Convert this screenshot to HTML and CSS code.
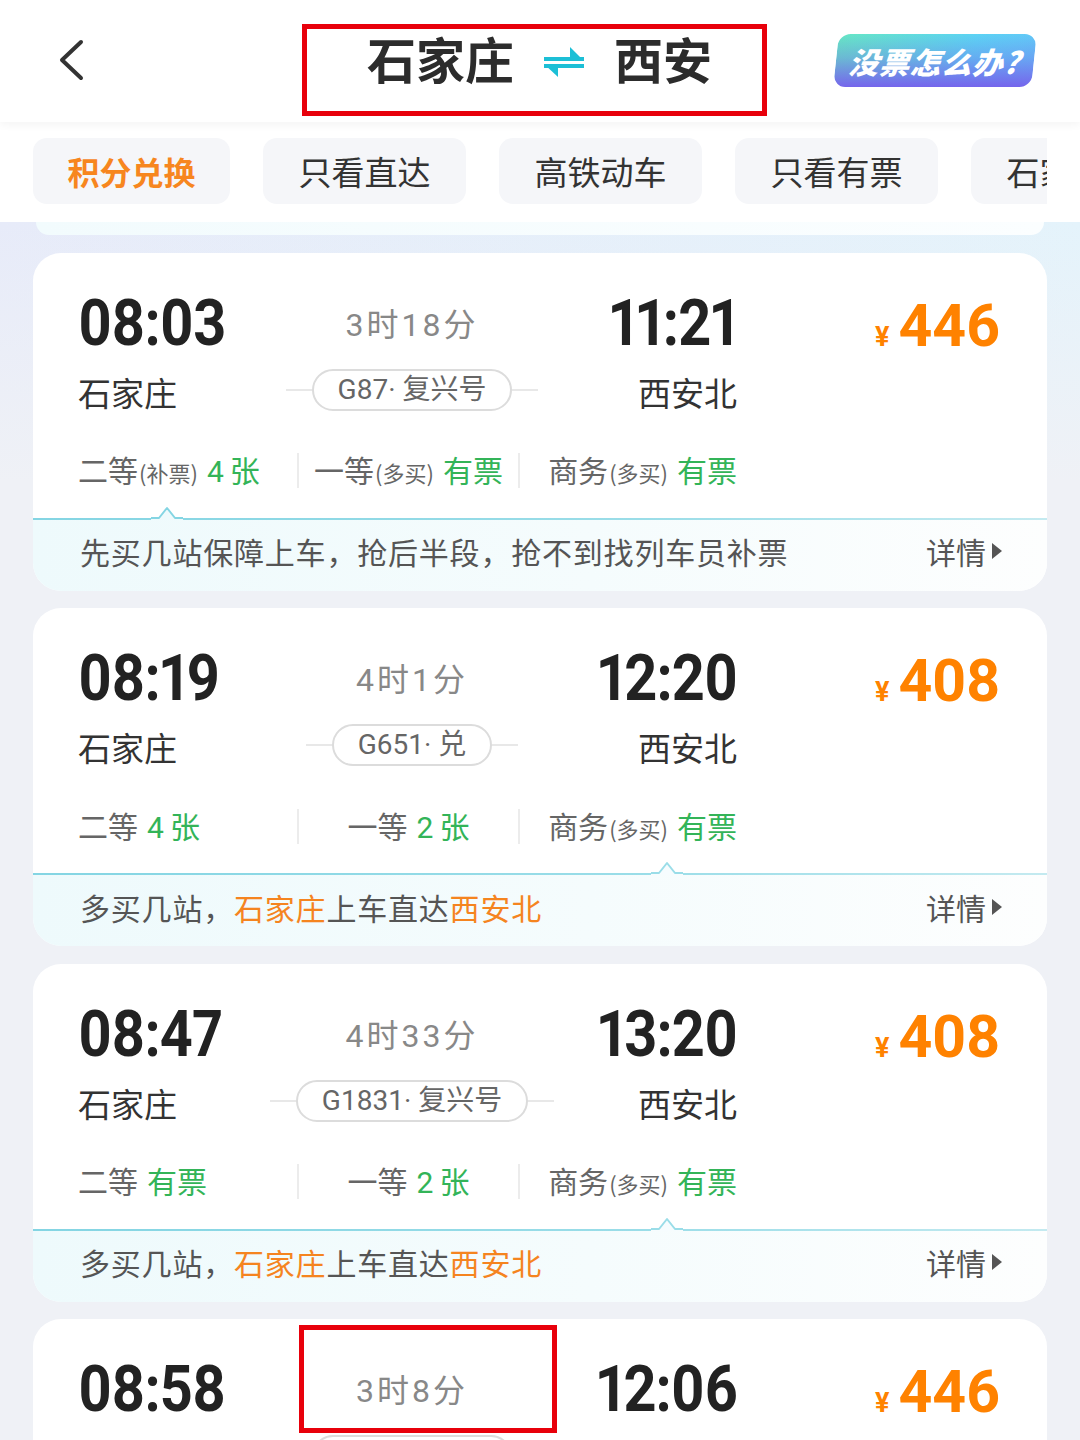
FILE: index.html
```html
<!DOCTYPE html>
<html lang="zh-CN">
<head>
<meta charset="utf-8">
<title>石家庄 ⇌ 西安</title>
<link rel="stylesheet" href="styles.css">
</head>
<body>
<header class="header">
  <svg class="back" viewBox="0 0 30 42" width="30" height="42"><path d="M25 3 L6 21 L25 39" fill="none" stroke="#333" stroke-width="4" stroke-linecap="round" stroke-linejoin="round"/></svg>
  <div class="title">
    <span>石家庄</span>
    <svg class="swap" viewBox="0 0 40 30" width="40" height="30">
      <path d="M0 10 H40 V14 H0 Z" fill="#1cbfd6"/>
      <path d="M26 0 L40 14 H26 Z" fill="#1cbfd6"/>
      <path d="M0 17 H40 V21 H0 Z" fill="#1cbfd6"/>
      <path d="M14 30 L0 17 H14 Z" fill="#1cbfd6"/>
    </svg>
    <span>西安</span>
  </div>
  <div class="help"><span>没票怎么办?</span></div>
</header>

<nav class="tabs">
  <div class="tabs-inner">
    <div class="chip first">积分兑换</div>
    <div class="chip">只看直达</div>
    <div class="chip">高铁动车</div>
    <div class="chip">只看有票</div>
    <div class="chip">石家庄站</div>
  </div>
</nav>

<main class="list">
  <div class="peek"></div>

  <section class="card">
    <div class="main">
      <div class="time">08:03</div>
      <div class="dur">3时18分</div>
      <div class="time end">11:21</div>
      <div class="price"><span class="yen">¥</span>446</div>
      <div class="station">石家庄</div>
      <div class="train"><span class="pill">G87· 复兴号</span></div>
      <div class="station end">西安北</div>
      <div></div>
    </div>
    <div class="seats">
      <div class="seat">二等<small>(补票)</small><b><em>4</em>张</b></div>
      <div class="seat">一等<small>(多买)</small><b>有票</b></div>
      <div class="seat">商务<small>(多买)</small><b>有票</b></div>
    </div>
    <div class="tip">
      <svg class="notch notch-l" viewBox="0 0 32 14" width="32" height="14"><path d="M0 14 V12 H8 L16 2 L24 12 H32 V14 Z" fill="#eefafc"/><path d="M0 12 H8 L16 2 L24 12 H32" fill="none" stroke="#84d5e3" stroke-width="2" stroke-linejoin="round"/></svg>
      <span class="tip-text">先买几站保障上车，抢后半段，抢不到找列车员补票</span>
      <span class="more">详情<i></i></span>
    </div>
  </section>

  <section class="card">
    <div class="main">
      <div class="time">08:19</div>
      <div class="dur">4时1分</div>
      <div class="time end">12:20</div>
      <div class="price"><span class="yen">¥</span>408</div>
      <div class="station">石家庄</div>
      <div class="train"><span class="pill">G651· 兑</span></div>
      <div class="station end">西安北</div>
      <div></div>
    </div>
    <div class="seats">
      <div class="seat">二等<b><em>4</em>张</b></div>
      <div class="seat">一等<b><em>2</em>张</b></div>
      <div class="seat">商务<small>(多买)</small><b>有票</b></div>
    </div>
    <div class="tip">
      <svg class="notch notch-r" viewBox="0 0 32 14" width="32" height="14"><path d="M0 14 V12 H8 L16 2 L24 12 H32 V14 Z" fill="#f6fcfe"/><path d="M0 12 H8 L16 2 L24 12 H32" fill="none" stroke="#9adde8" stroke-width="2" stroke-linejoin="round"/></svg>
      <span class="tip-text">多买几站，<span class="hl">石家庄</span>上车直达<span class="hl">西安北</span></span>
      <span class="more">详情<i></i></span>
    </div>
  </section>

  <section class="card">
    <div class="main">
      <div class="time">08:47</div>
      <div class="dur">4时33分</div>
      <div class="time end">13:20</div>
      <div class="price"><span class="yen">¥</span>408</div>
      <div class="station">石家庄</div>
      <div class="train"><span class="pill">G1831· 复兴号</span></div>
      <div class="station end">西安北</div>
      <div></div>
    </div>
    <div class="seats">
      <div class="seat">二等<b>有票</b></div>
      <div class="seat">一等<b><em>2</em>张</b></div>
      <div class="seat">商务<small>(多买)</small><b>有票</b></div>
    </div>
    <div class="tip">
      <svg class="notch notch-r" viewBox="0 0 32 14" width="32" height="14"><path d="M0 14 V12 H8 L16 2 L24 12 H32 V14 Z" fill="#f6fcfe"/><path d="M0 12 H8 L16 2 L24 12 H32" fill="none" stroke="#9adde8" stroke-width="2" stroke-linejoin="round"/></svg>
      <span class="tip-text">多买几站，<span class="hl">石家庄</span>上车直达<span class="hl">西安北</span></span>
      <span class="more">详情<i></i></span>
    </div>
  </section>

  <section class="card">
    <div class="main">
      <div class="time">08:58</div>
      <div class="dur">3时8分</div>
      <div class="time end">12:06</div>
      <div class="price"><span class="yen">¥</span>446</div>
      <div class="station">石家庄</div>
      <div class="train"><span class="pill">G89· 复兴号</span></div>
      <div class="station end">西安北</div>
      <div></div>
    </div>
    <div class="mark"></div>
  </section>
</main>
</body>
</html>
```

FILE: styles.css
```css
* {
  box-sizing: border-box;
  margin: 0;
  padding: 0;
}

body {
  margin: 0;
  width: 1080px;
  height: 1440px;
  overflow: hidden;
  font-family: "Noto Sans CJK SC", "Noto Sans", sans-serif;
  background: #eff1f6;
  color: #333;
}

/* header */
.header {
  height: 122px;
  background: #fff;
  display: flex;
  align-items: flex-start;
  position: relative;
  z-index: 2;
  box-shadow: 0 3px 8px rgba(0, 0, 0, 0.045);
}

.back {
  margin: 39px 0 0 56px;
  flex: none;
}

.title {
  margin: 24px 0 0 216px;
  width: 465px;
  height: 92px;
  border: 5px solid #e8000b;
  display: flex;
  align-items: flex-start;
  justify-content: center;
  gap: 30px;
  padding: 4px 0 0 10px;
  font-size: 49px;
  line-height: 50px;
  font-weight: 700;
  color: #2c2c2c;
  flex: none;
}

.swap {
  margin-top: 14px;
}

.help {
  margin: 34px 0 0 69px;
  width: 198px;
  height: 53px;
  flex: none;
  border-radius: 12px;
  transform: skewX(-6deg);
  background:
    linear-gradient(180deg, rgba(117, 101, 236, 0) 0%, rgba(117, 101, 236, 0.35) 45%, #7565ec 100%),
    linear-gradient(90deg, #66e7c4 0%, #5cd3f4 70%, #62c8f7 100%);
  display: flex;
  align-items: center;
  justify-content: center;
}

.help span {
  font-size: 30px;
  font-weight: 900;
  font-style: italic;
  color: #fff;
  letter-spacing: 1px;
}

/* tabs */
.tabs {
  background: #fff;
  height: 100px;
  padding: 16px 33px 0;
  position: relative;
  z-index: 1;
}

.tabs-inner {
  display: flex;
  gap: 33px;
  overflow: hidden;
}

.chip {
  flex: 0 0 203px;
  height: 66px;
  border-radius: 14px;
  background: #f5f6f9;
  font-size: 33px;
  color: #333;
  display: flex;
  align-items: center;
  justify-content: center;
  white-space: nowrap;
}

.chip.first {
  flex-basis: 197px;
  color: #f7861f;
  font-weight: 700;
  font-size: 32px;
}

/* list */
.list {
  padding: 0 33px;
  height: 1218px;
  background:
    linear-gradient(180deg, rgba(239, 241, 246, 0) 0px, #eff1f6 260px),
    linear-gradient(90deg, #e7ebf9, #e4f3fb);
}

.peek {
  height: 13px;
  margin: 0 3px;
  background: linear-gradient(90deg, #f2fbfd, #fbfeff);
  border-radius: 0 0 26px 26px;
}

.card {
  margin-top: 17.5px;
  height: 338px;
  background: #fff;
  border-radius: 28px;
  position: relative;
  overflow: hidden;
}

.main {
  display: grid;
  grid-template-columns: 212px 244px 203px 1fr;
  grid-template-rows: 64px 44px;
  row-gap: 14px;
  padding: 39px 47px 0 45px;
  align-items: center;
}

.time {
  font-family: Roboto, "Noto Sans", sans-serif;
  font-weight: 700;
  font-size: 64px;
  line-height: 64px;
  color: #222;
  letter-spacing: -1px;
  font-variant-numeric: proportional-nums;
  white-space: nowrap;
  transform: scaleX(0.9);
  transform-origin: left center;
}

.end {
  justify-self: end;
}

.time.end {
  transform-origin: right center;
}

.dur {
  justify-self: center;
  font-family: Roboto, "Noto Sans CJK SC", sans-serif;
  font-size: 32px;
  color: #888;
  letter-spacing: 3px;
  white-space: nowrap;
  margin-top: -4px;
}

.price {
  justify-self: end;
  align-self: end;
  color: #ff8200;
  font-family: Roboto, "Noto Sans", sans-serif;
  font-weight: 700;
  font-size: 59px;
  line-height: 59px;
  white-space: nowrap;
  margin-bottom: -11px;
}

.yen {
  font-size: 27px;
  margin-right: 9px;
}

.station {
  font-size: 33px;
  line-height: 44px;
  color: #333;
  white-space: nowrap;
}

.train {
  justify-self: center;
  position: relative;
  padding: 0 26px;
  display: flex;
  align-items: center;
  margin-top: -4px;
}

.train::before {
  content: "";
  position: absolute;
  left: 0;
  right: 0;
  top: 50%;
  height: 2px;
  margin-top: -1px;
  background: #e8e8e8;
}

.pill {
  position: relative;
  height: 42px;
  border: 2px solid #dcdcdc;
  border-radius: 21px;
  padding: 0 24px;
  background: #fff;
  font-family: Roboto, "Noto Sans CJK SC", sans-serif;
  font-size: 28px;
  line-height: 37px;
  color: #666;
  white-space: nowrap;
}

.seats {
  display: grid;
  grid-template-columns: 219px 221px 219px;
  margin: 37px 0 0 45px;
  height: 40px;
  align-items: center;
}

.seat {
  font-size: 30px;
  line-height: 32px;
  color: #666;
  white-space: nowrap;
}

.seat + .seat {
  border-left: 2px solid #ececec;
}

.seat:nth-child(2) {
  text-align: center;
}

.seat:nth-child(3) {
  text-align: right;
}

.seat small {
  font-size: 22px;
  margin-left: 1px;
}

.seat b {
  font-weight: 400;
  color: #33b458;
  font-family: Roboto, "Noto Sans CJK SC", sans-serif;
  margin-left: 9px;
}

.seat em {
  font-style: normal;
  margin-right: 6px;
}

.tip {
  position: relative;
  margin-top: 27px;
  height: 73px;
  display: flex;
  align-items: center;
  padding: 0 45px 6px 47px;
  background: linear-gradient(90deg, #eefafc 0%, #f5fcfd 55%, #fdfefe 100%);
}

.tip::before {
  content: "";
  position: absolute;
  left: 0;
  right: 0;
  top: 0;
  height: 2px;
  background: linear-gradient(90deg, #84d5e3 0%, #9adde8 60%, #c4eaf0 100%);
}

.notch {
  position: absolute;
  top: -12px;
}

.notch-l {
  left: 118px;
}

.notch-r {
  left: 618px;
}

.tip-text {
  flex: 1;
  font-size: 30px;
  color: #555;
  letter-spacing: 0.8px;
  white-space: nowrap;
}

.hl {
  color: #f5841f;
}

.more {
  font-size: 30px;
  color: #555;
  display: flex;
  align-items: center;
  gap: 6px;
}

.more i {
  display: block;
  width: 0;
  height: 0;
  border-left: 10px solid #555;
  border-top: 8px solid transparent;
  border-bottom: 8px solid transparent;
}

.mark {
  position: absolute;
  left: 266px;
  top: 6px;
  width: 258px;
  height: 108px;
  border: 5px solid #e8000b;
}
```
